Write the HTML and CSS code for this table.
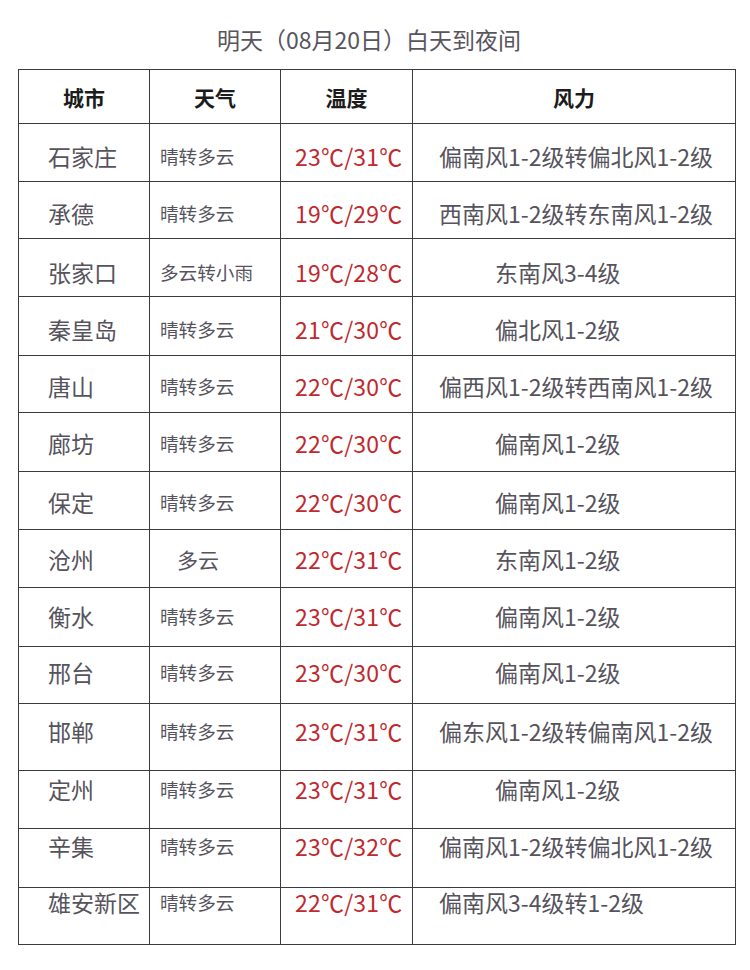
FILE: index.html
```html
<!DOCTYPE html>
<html lang="zh-CN">
<head>
<meta charset="utf-8">
<title>天气预报</title>
<link rel="stylesheet" href="styles.css">
</head>
<body>
<div class="page">
  <h1 class="title">明天（08月20日）白天到夜间</h1>
  <table class="forecast">
    <colgroup>
      <col class="c-city"><col class="c-wx"><col class="c-temp"><col class="c-wind">
    </colgroup>
    <thead>
      <tr class="h"><th>城市</th><th>天气</th><th>温度</th><th>风力</th></tr>
    </thead>
    <tbody>
      <tr class="r h58 p33"><td class="city">石家庄</td><td class="wx">晴转多云</td><td class="temp">23℃/31℃</td><td class="wind">偏南风1-2级转偏北风1-2级</td></tr>
      <tr class="r h57 p32"><td class="city">承德</td><td class="wx">晴转多云</td><td class="temp">19℃/29℃</td><td class="wind">西南风1-2级转东南风1-2级</td></tr>
      <tr class="r h58 p34"><td class="city">张家口</td><td class="wx">多云转小雨</td><td class="temp">19℃/28℃</td><td class="wind short">东南风3-4级</td></tr>
      <tr class="r h59 p33"><td class="city">秦皇岛</td><td class="wx">晴转多云</td><td class="temp">21℃/30℃</td><td class="wind short">偏北风1-2级</td></tr>
      <tr class="r h57 p31"><td class="city">唐山</td><td class="wx">晴转多云</td><td class="temp">22℃/30℃</td><td class="wind">偏西风1-2级转西南风1-2级</td></tr>
      <tr class="r h59 p31"><td class="city">廊坊</td><td class="wx">晴转多云</td><td class="temp">22℃/30℃</td><td class="wind short">偏南风1-2级</td></tr>
      <tr class="r h58 p31"><td class="city">保定</td><td class="wx">晴转多云</td><td class="temp">22℃/30℃</td><td class="wind short">偏南风1-2级</td></tr>
      <tr class="r h58 p30"><td class="city">沧州</td><td class="wx indent">多云</td><td class="temp">22℃/31℃</td><td class="wind short">东南风1-2级</td></tr>
      <tr class="r h59 p29"><td class="city">衡水</td><td class="wx">晴转多云</td><td class="temp">23℃/31℃</td><td class="wind short">偏南风1-2级</td></tr>
      <tr class="r h57 p26"><td class="city">邢台</td><td class="wx">晴转多云</td><td class="temp">23℃/30℃</td><td class="wind short">偏南风1-2级</td></tr>
      <tr class="r h67 p28"><td class="city">邯郸</td><td class="wx">晴转多云</td><td class="temp">23℃/31℃</td><td class="wind">偏东风1-2级转偏南风1-2级</td></tr>
      <tr class="r h58 p19"><td class="city">定州</td><td class="wx">晴转多云</td><td class="temp">23℃/31℃</td><td class="wind short">偏南风1-2级</td></tr>
      <tr class="r h59 p18"><td class="city">辛集</td><td class="wx">晴转多云</td><td class="temp">23℃/32℃</td><td class="wind">偏南风1-2级转偏北风1-2级</td></tr>
      <tr class="r h57 p15"><td class="city">雄安新区</td><td class="wx">晴转多云</td><td class="temp">22℃/31℃</td><td class="wind">偏南风3-4级转1-2级</td></tr>
    </tbody>
  </table>
</div>
</body>
</html>
```
FILE: styles.css
```css
html, body {
  margin: 0;
  padding: 0;
  background: #ffffff;
}
body {
  font-family: "Noto Sans CJK SC", "Noto Sans", sans-serif;
  color: #56535d;
}
.page {
  width: 750px;
  padding-top: 27px;
}
.title {
  margin: 0 0 18px 0;
  font-size: 23px;
  line-height: 24px;
  font-weight: 400;
  text-align: center;
  color: #58555e;
  padding-right: 12px;
}
.forecast {
  margin-left: 18px;
  width: 717px;
  border-collapse: collapse;
  table-layout: fixed;
}
.c-city { width: 131px; }
.c-wx { width: 131px; }
.c-temp { width: 132px; }
.c-wind { width: 323px; }

.forecast th,
.forecast td {
  border: 1px solid #3a3a3f;
  padding: 0;
  box-sizing: border-box;
  white-space: nowrap;
}
.forecast th {
  height: 54px;
  font-size: 21px;
  line-height: 23px;
  font-weight: 700;
  color: #1c1c1c;
  text-align: center;
  vertical-align: middle;
  padding-top: 1px;
  font-family: "Noto Sans CJK SC", serif;
}
.forecast td {
  vertical-align: top;
  text-align: left;
  line-height: 24px;
}
.city {
  font-size: 23px;
  padding-left: 29px !important;
}
.wx {
  font-size: 18.6px;
  padding-left: 10px !important;
}
.wx.indent {
  padding-left: 27px !important;
  font-size: 21px;
}
.temp {
  font-size: 23px;
  color: #c0292e;
  padding-left: 14px !important;
  letter-spacing: 0.2px;
}
.wind {
  font-size: 23px;
  padding-left: 26px !important;
}
.wind.short {
  padding-left: 82px !important;
}

.h57 td { height: 57px; }
.h58 td { height: 58px; }
.h59 td { height: 59px; }
.h67 td { height: 67px; }

.p33 td { padding-top: 20px; }
.p32 td { padding-top: 19px; }
.p34 td { padding-top: 21px; }
.p31 td { padding-top: 18px; }
.p30 td { padding-top: 17px; }
.p29 td { padding-top: 16px; }
.p28 td { padding-top: 15px; }
.p26 td { padding-top: 13px; }
.p19 td { padding-top: 6px; }
.p18 td { padding-top: 5px; }
.p15 td { padding-top: 2px; }
```
